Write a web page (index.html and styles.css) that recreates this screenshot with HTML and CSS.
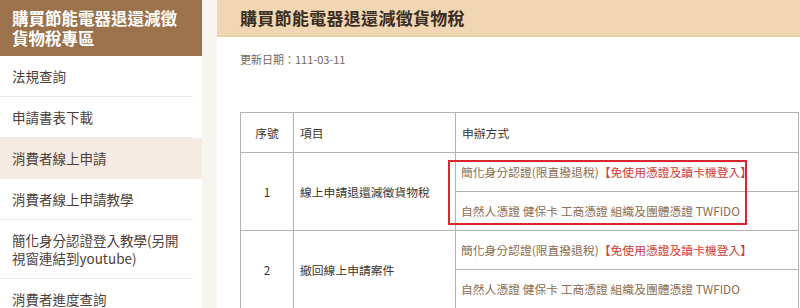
FILE: index.html
```html
<!DOCTYPE html>
<html lang="zh-Hant">
<head>
<meta charset="utf-8">
<title>購買節能電器退還減徵貨物稅</title>
<link rel="stylesheet" href="styles.css">
</head>
<body>
<div class="page">
  <aside class="sidebar">
    <div class="side-head">購買節能電器退還減徵貨物稅專區</div>
    <ul class="side-menu">
      <li class="side-item">法規查詢</li>
      <li class="side-item">申請書表下載</li>
      <li class="side-item active">消費者線上申請</li>
      <li class="side-item">消費者線上申請教學</li>
      <li class="side-item">簡化身分認證登入教學(另開視窗連結到youtube)</li>
      <li class="side-item">消費者進度查詢</li>
    </ul>
  </aside>
  <main class="main">
    <div class="main-head">購買節能電器退還減徵貨物稅</div>
    <div class="content">
      <div class="date">更新日期：111-03-11</div>
      <div class="table-wrap">
        <table class="apply">
          <colgroup>
            <col class="c1"><col class="c2"><col class="c3">
          </colgroup>
          <tr class="head-row">
            <th class="num">序號</th>
            <th>項目</th>
            <th>申辦方式</th>
          </tr>
          <tr>
            <td class="num" rowspan="2">1</td>
            <td rowspan="2">線上申請退還減徵貨物稅</td>
            <td class="way">簡化身分認證(限直撥退稅)<span class="red">【免使用憑證及讀卡機登入】</span></td>
          </tr>
          <tr>
            <td class="way">自然人憑證 健保卡 工商憑證 組織及團體憑證 TWFIDO</td>
          </tr>
          <tr>
            <td class="num" rowspan="2">2</td>
            <td rowspan="2">撤回線上申請案件</td>
            <td class="way">簡化身分認證(限直撥退稅)<span class="red">【免使用憑證及讀卡機登入】</span></td>
          </tr>
          <tr>
            <td class="way">自然人憑證 健保卡 工商憑證 組織及團體憑證 TWFIDO</td>
          </tr>
        </table>
        <div class="highlight"></div>
      </div>
    </div>
  </main>
</div>
</body>
</html>
```
FILE: styles.css
```css
* { box-sizing: border-box; }
html, body { margin: 0; padding: 0; }
body {
  background: #f8f4f0;
  font-family: "Noto Sans CJK TC", "Noto Sans", sans-serif;
  color: #4a3d33;
  overflow: hidden;
}
.page {
  display: flex;
  gap: 15px;
  height: 308px;
}
.sidebar {
  width: 202px;
  flex: none;
  background: #fff;
}
.side-head {
  background: #9b724b;
  color: #fff;
  font-weight: 700;
  font-size: 16.5px;
  line-height: 20px;
  padding: 8px 20px 8px 12px;
  height: 56px;
}
.side-menu {
  list-style: none;
  margin: 0;
  padding: 0;
}
.side-item {
  font-size: 13.5px;
  line-height: 18px;
  padding: 11px 4px 11px 12px;
  color: #4d4038;
  border-bottom: 1px solid #ece8e4;
  margin-right: 9px;
}
.side-item.active {
  background: #f6ebe2;
  margin-right: 0;
  border-bottom-color: #f6ebe2;
}
.main {
  flex: 1;
  background: #fff;
}
.main-head {
  height: 37px;
  background: #f0d6b2;
  border-bottom: 2px solid #ead0a8;
  font-size: 17px;
  font-weight: 700;
  line-height: 35px;
  padding-left: 23px;
  color: #3a2d23;
  letter-spacing: 0.3px;
}
.content {
  padding: 14px 0 0 23px;
}
.date {
  font-size: 11px;
  line-height: 16px;
  color: #75665b;
}
.table-wrap {
  position: relative;
  margin-top: 45px;
  width: 558px;
}
.apply {
  border-collapse: collapse;
  width: 558px;
  table-layout: fixed;
  font-size: 11.8px;
  color: #3c3631;
}
.c1 { width: 53px; }
.c2 { width: 162px; }
.c3 { width: 343px; }
.apply th, .apply td {
  border: 1px solid #b3b3b3;
  text-align: left;
  font-weight: 400;
  padding: 0 6px;
  height: 39px;
  line-height: 18px;
  vertical-align: middle;
}
.apply .head-row th { height: 40px; }
.apply .num { text-align: center; }
.apply .way { color: #8a6c52; padding-left: 5px; }
.red { color: #cf3a33; }
.highlight {
  position: absolute;
  left: 208px;
  top: 48px;
  width: 299px;
  height: 65px;
  border: 2px solid #d8262c;
  pointer-events: none;
}
```
